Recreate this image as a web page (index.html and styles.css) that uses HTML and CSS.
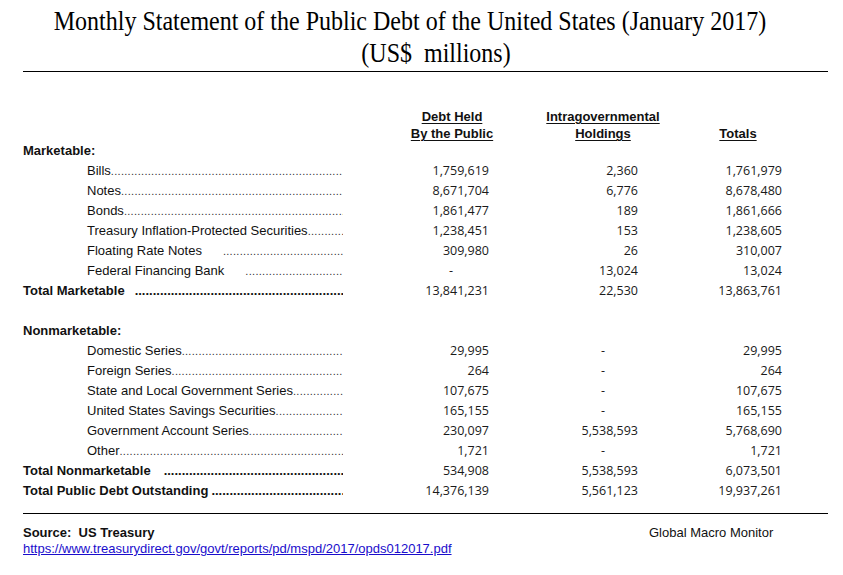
FILE: index.html
```html
<!DOCTYPE html>
<html>
<head>
<meta charset="utf-8">
<link rel="stylesheet" href="styles.css">
</head>
<body>
<div class="page">
  <header class="title">
    <h1 class="title-main">Monthly Statement of the Public Debt of the United States (January 2017)</h1>
    <p class="title-sub">(US$&nbsp; millions)</p>
  </header>
  <div class="rule rule-top"></div>

  <section class="statement">
    <div class="col-heads">
      <div></div>
      <div class="col-head">Debt Held<br>By the Public</div>
      <div class="col-head">Intragovernmental<br>Holdings</div>
      <div class="col-head">Totals</div>
    </div>

    <div class="grid">
      <div class="label section">Marketable:</div><div></div><div></div><div></div>

      <div class="label item"><span>Bills</span><span class="leader"></span></div><div class="num">1,759,619</div><div class="num">2,360</div><div class="num">1,761,979</div>
      <div class="label item"><span>Notes</span><span class="leader"></span></div><div class="num">8,671,704</div><div class="num">6,776</div><div class="num">8,678,480</div>
      <div class="label item"><span>Bonds</span><span class="leader"></span></div><div class="num">1,861,477</div><div class="num">189</div><div class="num">1,861,666</div>
      <div class="label item"><span>Treasury Inflation-Protected Securities</span><span class="leader"></span></div><div class="num">1,238,451</div><div class="num">153</div><div class="num">1,238,605</div>
      <div class="label item"><span>Floating Rate Notes</span><span class="leader gap-frn"></span></div><div class="num">309,980</div><div class="num">26</div><div class="num">310,007</div>
      <div class="label item"><span>Federal Financing Bank</span><span class="leader gap-ffb"></span></div><div class="num dash1">-</div><div class="num">13,024</div><div class="num">13,024</div>
      <div class="label total"><span>Total Marketable</span><span class="leader bold gap-tm"></span></div><div class="num">13,841,231</div><div class="num">22,530</div><div class="num">13,863,761</div>

      <div class="spacer"></div>

      <div class="label section">Nonmarketable:</div><div></div><div></div><div></div>
      <div class="label item"><span>Domestic Series</span><span class="leader"></span></div><div class="num">29,995</div><div class="num dash2">-</div><div class="num">29,995</div>
      <div class="label item"><span>Foreign Series</span><span class="leader"></span></div><div class="num">264</div><div class="num dash2">-</div><div class="num">264</div>
      <div class="label item"><span>State and Local Government Series</span><span class="leader"></span></div><div class="num">107,675</div><div class="num dash2">-</div><div class="num">107,675</div>
      <div class="label item"><span>United States Savings Securities</span><span class="leader"></span></div><div class="num">165,155</div><div class="num dash2">-</div><div class="num">165,155</div>
      <div class="label item"><span>Government Account Series</span><span class="leader"></span></div><div class="num">230,097</div><div class="num">5,538,593</div><div class="num">5,768,690</div>
      <div class="label item"><span>Other</span><span class="leader"></span></div><div class="num">1,721</div><div class="num dash2">-</div><div class="num">1,721</div>
      <div class="label total"><span>Total Nonmarketable</span><span class="leader bold gap-tn"></span></div><div class="num">534,908</div><div class="num">5,538,593</div><div class="num">6,073,501</div>
      <div class="label total"><span>Total Public Debt Outstanding</span><span class="leader bold gap-tp"></span></div><div class="num">14,376,139</div><div class="num">5,561,123</div><div class="num">19,937,261</div>
    </div>
  </section>

  <div class="rule rule-bottom"></div>

  <footer class="foot">
    <div class="source">
      <div class="source-name">Source:&nbsp; US Treasury</div>
      <a class="source-link" href="#">https://www.treasurydirect.gov/govt/reports/pd/mspd/2017/opds012017.pdf</a>
    </div>
    <div class="credit">Global Macro Monitor</div>
  </footer>
</div>
</body>
</html>
```

FILE: styles.css
```css
html, body {
  margin: 0;
  padding: 0;
  background: #ffffff;
}

.page {
  width: 843px;
  height: 575px;
  overflow: hidden;
  font-family: "Liberation Sans", Arial, sans-serif;
  color: #000;
}

.title {
  padding-top: 5px;
  font-family: "Liberation Serif", "Times New Roman", serif;
  font-weight: normal;
  text-align: center;
  color: #000;
}

.title-main {
  margin: 0;
  font-size: 24px;
  font-weight: normal;
  line-height: 32px;
  padding-right: 23px;
  transform: scaleY(1.12);
}

.title-sub {
  margin: 0;
  font-size: 24px;
  line-height: 32px;
  padding-left: 29px;
  transform: scaleY(1.12);
}

.rule {
  margin-left: 23px;
  width: 805px;
  height: 0;
  border-top: 1px solid #000;
}

.rule-top {
  margin-top: 2px;
}

.statement {
  padding-left: 23px;
  padding-top: 36px;
}

.col-heads {
  display: grid;
  grid-template-columns: 354px 150px 152px 118px;
  align-items: end;
  font-weight: bold;
  font-size: 13px;
  line-height: 17px;
}

.col-head {
  text-align: center;
  text-decoration: underline;
  text-underline-offset: 2px;
  color: #111;
}

.grid {
  display: grid;
  grid-template-columns: 320px 146px 149px 144px;
  grid-auto-rows: 20px;
  align-items: center;
  margin-top: -1px;
}

.spacer {
  grid-column: 1 / -1;
}

.label {
  display: flex;
  align-items: baseline;
  font-size: 13px;
  line-height: 20px;
  white-space: nowrap;
  color: #111;
}

.section, .total {
  font-weight: bold;
}

.item {
  padding-left: 64px;
}

.leader {
  flex: 1;
  overflow: hidden;
  white-space: nowrap;
  font-size: 11px;
  letter-spacing: 0.3px;
  color: #333;
}

.leader::after {
  content: "....................................................................................................................................................................................";
}

.leader.bold {
  font-weight: bold;
  font-size: 13px;
  letter-spacing: 0;
  color: #111;
}

.gap-frn { margin-left: 21px; }
.gap-ffb { margin-left: 21px; }
.gap-tm { margin-left: 10px; }
.gap-tn { margin-left: 13px; }
.gap-tp { margin-left: 3px; }

.num {
  font-family: "Open Sans", "Noto Sans", sans-serif;
  font-size: 12.5px;
  line-height: 20px;
  text-align: right;
  color: #1a1a1a;
}

.dash1 {
  padding-right: 36px;
}

.dash2 {
  padding-right: 33px;
}

.rule-bottom {
  margin-top: 12px;
}

.foot {
  display: grid;
  grid-template-columns: 626px auto;
  padding-left: 23px;
  padding-top: 10px;
}

.source-name {
  font-weight: bold;
  font-size: 13px;
  line-height: 17px;
  color: #111;
}

.source-link {
  display: block;
  color: #1a0dcc;
  text-decoration: underline;
  font-size: 13px;
  line-height: 15px;
}

.credit {
  font-size: 13px;
  line-height: 17px;
  color: #111;
}
```
